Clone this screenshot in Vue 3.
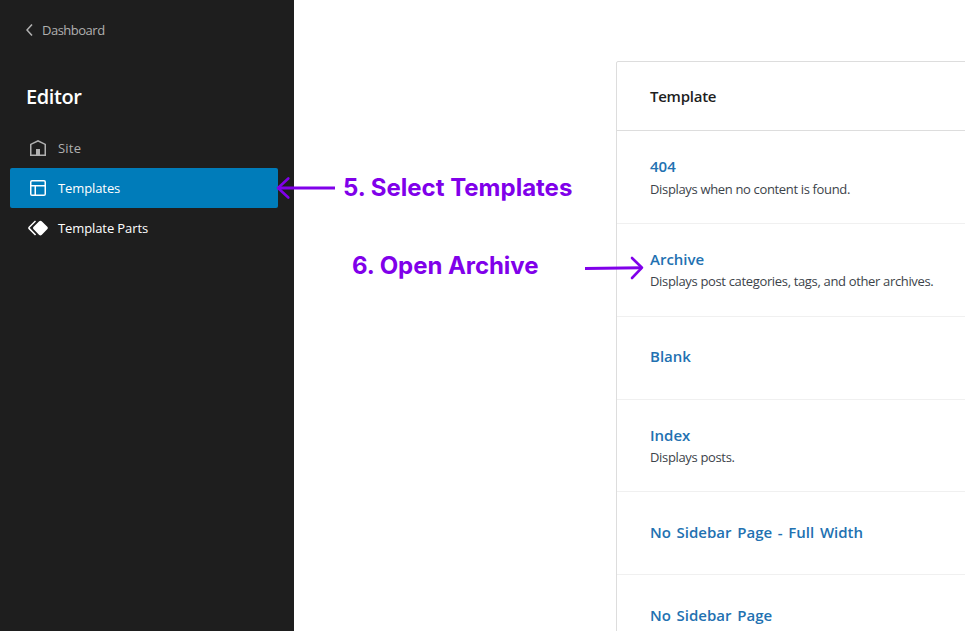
<script setup>
const navItems = [
  {
    label: 'Site',
    state: 'muted',
    icon: 'M12 4L4 7.9V20h16V7.9L12 4zm6.5 14.5H14V13h-4v5.5H5.5V8.8L12 5.7l6.5 3.1v9.7z',
  },
  {
    label: 'Templates',
    state: 'active',
    icon: 'M18 5.5H6a.5.5 0 00-.5.5v3h13V6a.5.5 0 00-.5-.5zm.5 5H10v8h8a.5.5 0 00.5-.5v-7.5zm-10 0h-3V18a.5.5 0 00.5.5h2.5v-8zM6 4h12a2 2 0 012 2v12a2 2 0 01-2 2H6a2 2 0 01-2-2V6a2 2 0 012-2z',
  },
  {
    label: 'Template Parts',
    state: 'plain',
    icon: 'M21.3 10.8l-5.6-5.6c-.7-.7-1.8-.7-2.5 0l-5.6 5.6c-.7.7-.7 1.8 0 2.5l5.6 5.6c.3.3.8.5 1.2.5s.9-.2 1.2-.5l5.6-5.6c.8-.7.8-1.9.1-2.5zm-17.6 1L10 5.5l-1-1-6.3 6.3c-.7.7-.7 1.8 0 2.5L9 19.5l1.1-1.1-6.3-6.3c-.2 0-.2-.2-.1-.3z',
  },
]

const templates = [
  { title: '404', text: 'Displays when no content is found.', size: 'tall first' },
  { title: 'Archive', text: 'Displays post categories, tags, and other archives.', size: 'tall' },
  { title: 'Blank', size: 'short raised' },
  { title: 'Index', text: 'Displays posts.', size: 'medium' },
  { title: 'No Sidebar Page - Full Width', size: 'short' },
  { title: 'No Sidebar Page', size: 'short' },
]
</script>

<template>
  <div class="screen">
    <aside class="sidebar">
      <a class="back">
        <svg viewBox="0 0 24 24"><path d="M14.6 7l-1.2-1L8 12l5.4 6 1.2-1-4.6-5z" /></svg>
        <span>Dashboard</span>
      </a>
      <h1>Editor</h1>
      <nav>
        <a v-for="item in navItems" :key="item.label" class="item" :class="item.state">
          <svg viewBox="0 0 24 24"><path :d="item.icon" /></svg>
          <span>{{ item.label }}</span>
        </a>
      </nav>
    </aside>
    <main>
      <section class="card">
        <header><span>Template</span></header>
        <div v-for="t in templates" :key="t.title" class="row" :class="t.size">
          <a class="title">{{ t.title }}</a>
          <p v-if="t.text" class="desc">{{ t.text }}</p>
        </div>
      </section>
    </main>

    <svg class="arrow arrow-left" viewBox="0 0 60 24">
      <path d="M59 12H2" />
      <path class="head" d="M12.3 2.5L2 12l10.3 9.5" />
    </svg>
    <div class="note note-five">5. Select Templates</div>
    <div class="note note-six">6. Open Archive</div>
    <svg class="arrow arrow-right" viewBox="0 0 60 24">
      <path d="M0 12.4L57 11.7" />
      <path class="head" d="M47 2L57 11.7L47 22" />
    </svg>
  </div>
</template>

<style>
body {
  margin: 0;
  overflow: hidden;
}
</style>

<style scoped>
.screen {
  position: relative;
  display: flex;
  width: 965px;
  height: 631px;
  overflow: hidden;
  background: #fff;
  font-family: "Open Sans", "Noto Sans", sans-serif;
  white-space: nowrap;
}
.sidebar {
  width: 294px;
  flex: none;
  background: #1e1e1e;
}
svg {
  display: block;
}
.back {
  display: flex;
  align-items: center;
  height: 24px;
  margin: 18px 0 0 18px;
  color: #b0b0b0;
  font-size: 13px;
  letter-spacing: -0.5px;
}
.back svg,
.item svg {
  width: 24px;
  height: 24px;
  flex: none;
  fill: currentColor;
}
h1 {
  margin: 41px 0 0 26px;
  height: 28px;
  line-height: 28px;
  color: #fff;
  font-size: 20px;
  font-weight: 600;
  letter-spacing: -0.4px;
}
nav {
  padding: 17px 16px 0 10px;
}
.item {
  display: flex;
  align-items: center;
  gap: 8px;
  height: 40px;
  padding-left: 16px;
  border-radius: 2px;
  color: #fff;
  font-size: 13px;
  letter-spacing: -0.1px;
}
.item.muted {
  color: #b0b0b0;
  letter-spacing: 0.2px;
}
.item.active {
  background: #007cba;
}
main {
  flex: 1;
  padding: 61px 0 0 322px;
}
.card {
  width: 420px;
  box-sizing: border-box;
  border: 1px solid #ddd;
  border-radius: 2px;
}
header {
  display: flex;
  align-items: center;
  height: 68px;
  padding-left: 33px;
  border-bottom: 1px solid #ddd;
  color: #1e1e1e;
  font-size: 15px;
  font-weight: 600;
  letter-spacing: -0.25px;
}
.row {
  display: flex;
  flex-direction: column;
  justify-content: center;
  box-sizing: border-box;
  padding: 0 0 2px 33px;
  border-bottom: 1px solid #f0f0f0;
}
.tall {
  height: 93px;
}
.medium {
  height: 92px;
}
.short {
  height: 83px;
}
.raised {
  padding-bottom: 4px;
}
.title {
  color: #2271b1;
  font-size: 15px;
  font-weight: 600;
  line-height: 24px;
  word-spacing: 1.8px;
}
.desc {
  margin: 0;
  color: #3c434a;
  font-size: 13px;
  line-height: 20px;
  letter-spacing: -0.34px;
}
.first .desc {
  padding-top: 1px;
  margin-bottom: -1px;
}
.note {
  position: absolute;
  color: #8000ea;
  font-family: Inter, sans-serif;
  font-size: 24px;
  font-weight: 700;
  line-height: 30px;
}
.note-five {
  left: 343px;
  top: 173px;
}
.note-six {
  left: 352px;
  top: 251px;
  letter-spacing: -0.06px;
}
.arrow {
  position: absolute;
  width: 60px;
  height: 24px;
  fill: none;
  stroke: #8000ea;
  stroke-width: 3;
}
.head {
  stroke-linecap: round;
  stroke-linejoin: round;
  stroke-width: 2.6;
}
.arrow-left {
  left: 276px;
  top: 176px;
}
.arrow-right {
  left: 585px;
  top: 256px;
}
</style>
